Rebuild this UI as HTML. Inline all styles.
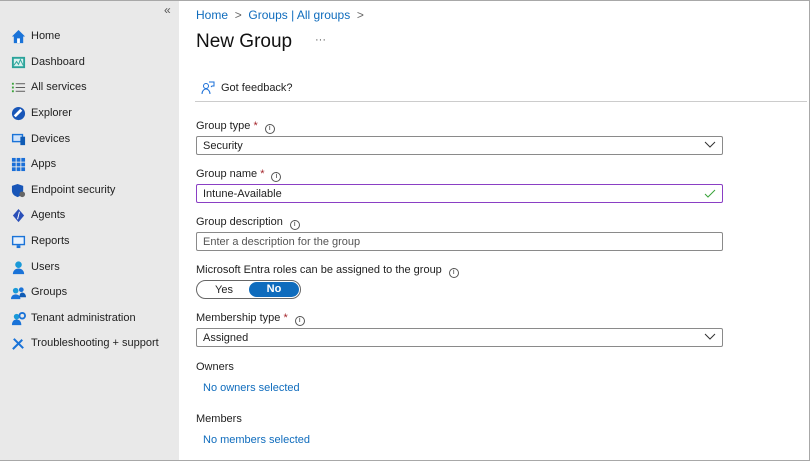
<!DOCTYPE html>
<html><head><meta charset="utf-8"><style>
*{box-sizing:border-box;margin:0;padding:0}
body{width:810px;height:461px;overflow:hidden;background:#fff;font-family:"Liberation Sans",sans-serif;font-size:11px;color:#222;position:relative}
.frame{position:absolute;left:0;top:0;width:810px;height:461px;border:1px solid #a8a8a8;border-left:none;pointer-events:none}
.side{position:absolute;left:0;top:0;width:179px;height:461px;background:#e9e9e9}
.it{position:absolute;left:11px;height:16px;display:flex;align-items:center}
.it svg{width:15px;height:15px;margin-right:5px}
.a{position:absolute;white-space:nowrap}
.lnk{color:#0f6cbd}
.box{position:absolute;left:196px;width:527px;height:19px;border:1px solid #8a8a8a;border-radius:2px;padding-left:6px;line-height:18px}
.chev{position:absolute;right:6px;top:4px}
.req{color:#a4262c}
.info{display:inline-block;width:10px;height:10px;border:1px solid #555;border-radius:50%;font-size:7px;text-align:center;line-height:8px;margin-left:7px;vertical-align:-1px}
</style></head><body>
<div class="side">
<div class="a" style="left:164px;top:3px;color:#555;font-size:12px">«</div>
<div class="it" style="top:28px"><svg viewBox="0 0 16 16"><path d="M1 8L8 1l7 7h-2v7H3V8z" fill="#1a73d8"/><rect x="6.5" y="10" width="3" height="5" fill="#fff"/></svg>Home</div>
<div class="it" style="top:54px"><svg viewBox="0 0 16 16"><rect x="1" y="2" width="14" height="12" fill="#2aa39a"/><rect x="3" y="4" width="10" height="8" fill="#d9f2ef"/><path d="M3 11l3-4 2 3 2-5 3 6" stroke="#2aa39a" fill="none"/></svg>Dashboard</div>
<div class="it" style="top:79px"><svg viewBox="0 0 16 16"><g fill="#3aa33a"><rect x="1" y="3" width="2" height="2"/><rect x="1" y="7" width="2" height="2"/><rect x="1" y="11" width="2" height="2"/></g><g fill="#555"><rect x="5" y="3.5" width="10" height="1"/><rect x="5" y="7.5" width="10" height="1"/><rect x="5" y="11.5" width="10" height="1"/></g></svg>All services</div>
<div class="it" style="top:105px"><svg viewBox="0 0 16 16"><circle cx="8" cy="8" r="7" fill="#1856b8"/><path d="M4 11L11 4" stroke="#fff" stroke-width="3"/></svg>Explorer</div>
<div class="it" style="top:131px"><svg viewBox="0 0 16 16"><rect x="1" y="2" width="12" height="9" fill="#1a73d8"/><rect x="2.5" y="3.5" width="9" height="6" fill="#cfe3fb"/><rect x="10" y="5" width="5" height="9" fill="#0f5bb5"/></svg>Devices</div>
<div class="it" style="top:156px"><svg viewBox="0 0 16 16" fill="#1a6fd8"><rect x="1" y="1" width="4" height="4"/><rect x="6" y="1" width="4" height="4"/><rect x="11" y="1" width="4" height="4"/><rect x="1" y="6" width="4" height="4"/><rect x="6" y="6" width="4" height="4"/><rect x="11" y="6" width="4" height="4"/><rect x="1" y="11" width="4" height="4"/><rect x="6" y="11" width="4" height="4"/><rect x="11" y="11" width="4" height="4"/></svg>Apps</div>
<div class="it" style="top:182px"><svg viewBox="0 0 16 16"><path d="M7 1l6 2v5c0 4-3 6-6 7-3-1-6-3-6-7V3z" fill="#1856b8"/><circle cx="12" cy="12" r="3" fill="#666"/></svg>Endpoint security</div>
<div class="it" style="top:207px"><svg viewBox="0 0 16 16"><path d="M8 1l6 7-6 7-6-7z" fill="#2a4fb8"/><path d="M7 12l2-8" stroke="#fff"/></svg>Agents</div>
<div class="it" style="top:233px"><svg viewBox="0 0 16 16"><rect x="1" y="2" width="14" height="10" fill="#1a73d8"/><rect x="2.5" y="3.5" width="11" height="7" fill="#e8f1fc"/><rect x="6" y="12" width="4" height="3" fill="#1a73d8"/></svg>Reports</div>
<div class="it" style="top:259px"><svg viewBox="0 0 16 16"><circle cx="8" cy="5" r="3.5" fill="#1a9ad8"/><path d="M2 15c0-4 3-6 6-6s6 2 6 6z" fill="#1a73d8"/></svg>Users</div>
<div class="it" style="top:284px"><svg viewBox="0 0 16 16"><circle cx="5" cy="6" r="3" fill="#1a9ad8"/><circle cx="11" cy="5" r="2.5" fill="#1a73d8"/><path d="M0 15c0-3 2-5 5-5s5 2 5 5z" fill="#1a73d8"/><path d="M9 13c0-3 1-5 3-5s4 2 4 5z" fill="#0f5bb5"/></svg>Groups</div>
<div class="it" style="top:310px"><svg viewBox="0 0 16 16"><circle cx="6" cy="6" r="3" fill="#1a9ad8"/><path d="M1 15c0-4 2-6 5-6s5 2 5 6z" fill="#1a73d8"/><circle cx="12" cy="5" r="3" fill="none" stroke="#1a73d8" stroke-width="2"/></svg>Tenant administration</div>
<div class="it" style="top:335px"><svg viewBox="0 0 16 16"><path d="M2 14L12 4M3 3l10 10" stroke="#1a73d8" stroke-width="2.2"/></svg>Troubleshooting + support</div>
</div>
<div class="a" style="left:196px;top:8px;font-size:12px"><span class="lnk">Home</span> <span style="color:#666">&nbsp;&gt;&nbsp;</span> <span class="lnk">Groups | All groups</span> <span style="color:#666">&nbsp;&gt;</span></div>
<div class="a" style="left:196px;top:31px;font-size:19px;color:#111">New Group</div>
<div class="a" style="left:315px;top:34px;color:#555">···</div>
<svg class="a" style="left:201px;top:81px" width="14" height="14" viewBox="0 0 14 14"><circle cx="5" cy="5" r="2.5" fill="none" stroke="#1a6fd8"/><path d="M1 13c0-3 2-5 4-5s4 2 4 5M8 1h5v4h-2l-1 1" fill="none" stroke="#1a6fd8"/></svg>
<div class="a" style="left:221px;top:82px">Got feedback?</div>
<div class="a" style="left:195px;top:101px;width:612px;height:1px;background:#ccc"></div>
<div class="a" style="left:196px;top:120px">Group type <span class="req">*</span><span class="info">i</span></div>
<div class="box" style="top:136px">Security<svg class="chev" width="12" height="8"><path d="M1 1l5 5 5-5" stroke="#333" fill="none"/></svg></div>
<div class="a" style="left:196px;top:168px">Group name <span class="req">*</span><span class="info">i</span></div>
<div class="box" style="top:184px;border-color:#8a3fc4">Intune-Available<svg class="chev" width="12" height="9"><path d="M1 5l3 3 7-7" stroke="#3aa33a" fill="none"/></svg></div>
<div class="a" style="left:196px;top:216px">Group description<span class="info">i</span></div>
<div class="box" style="top:232px;color:#555">Enter a description for the group</div>
<div class="a" style="left:196px;top:264px">Microsoft Entra roles can be assigned to the group<span class="info">i</span></div>
<div class="a" style="left:196px;top:280px;width:105px;height:19px;border:1px solid #666;border-radius:10px"></div>
<div class="a" style="left:215px;top:284px">Yes</div>
<div class="a" style="left:249px;top:282px;width:50px;height:15px;background:#0f6cbd;border-radius:8px;color:#fff;font-weight:bold;text-align:center;line-height:15px">No</div>
<div class="a" style="left:196px;top:312px">Membership type <span class="req">*</span><span class="info">i</span></div>
<div class="box" style="top:328px">Assigned<svg class="chev" width="12" height="8"><path d="M1 1l5 5 5-5" stroke="#333" fill="none"/></svg></div>
<div class="a" style="left:196px;top:361px">Owners</div>
<div class="a lnk" style="left:203px;top:382px">No owners selected</div>
<div class="a" style="left:196px;top:413px">Members</div>
<div class="a lnk" style="left:203px;top:434px">No members selected</div>
<div class="frame"></div>
</body></html>
